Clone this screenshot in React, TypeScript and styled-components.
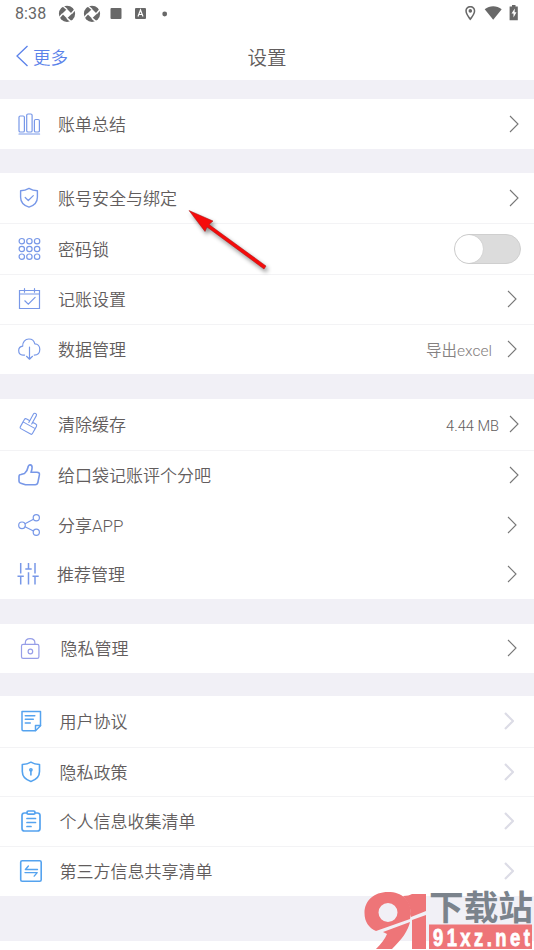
import React from "react";
import styled, { createGlobalStyle } from "styled-components";

const GlobalStyle = createGlobalStyle`
  * { box-sizing: border-box; }
  body {
    margin: 0;
    background: #f1f0f6;
    font-family: Roboto, "Noto Sans CJK SC", sans-serif;
    color: #625d5d;
  }
`;

const Screen = styled.main`
  position: relative;
  width: 534px;
  height: 950px;
  overflow: hidden;
  background: #f1f0f6;
  display: flex;
  flex-direction: column;
`;

const StatusBar = styled.div`
  height: 28px;
  flex: none;
  background: #fff;
  display: flex;
  align-items: center;
  justify-content: space-between;
  padding-left: 15px;
  color: #666;
`;

const StatusLeft = styled.div`
  display: flex;
  align-items: center;
`;

const Clock = styled.span`
  width: 41px;
  font-size: 16px;
  line-height: 28px;
  letter-spacing: 0.1px;
`;

const Header = styled.header`
  height: 52px;
  flex: none;
  background: #fff;
  display: grid;
  grid-template-columns: 1fr auto 1fr;
  align-items: center;
  padding: 7px 15px 0 15px;
`;

const BackButton = styled.button`
  display: flex;
  align-items: center;
  gap: 4px;
  padding: 0;
  border: 0;
  background: none;
  color: #5b82ea;
  font: inherit;
  font-size: 17.5px;
  font-weight: 350;
  line-height: 28px;

  svg {
    margin-top: -3px;
  }
`;

const Title = styled.h1`
  margin: 0;
  padding-top: 3px;
  font-size: 19.5px;
  font-weight: 350;
  line-height: 28px;
`;

const Card = styled.section<{ $gap: number }>`
  flex: none;
  margin-top: ${(p) => p.$gap}px;
  background: #fff;
`;

const RowBox = styled.div<{ $height: number; $divider?: boolean; $end: number }>`
  height: ${(p) => p.$height}px;
  display: flex;
  align-items: center;
  padding: 0 ${(p) => p.$end}px 0 13px;
  border-bottom: ${(p) => (p.$divider ? "1px solid #f3f3f5" : "0")};
`;

const IconSvg = styled.svg<{ $color: string }>`
  flex: none;
  width: 32px;
  height: 32px;
  margin-top: -1px;
  fill: none;
  stroke: ${(p) => p.$color};
  stroke-width: 1.2;
  stroke-linecap: round;
  stroke-linejoin: round;
`;

const Label = styled.span<{ $start: number }>`
  flex: 1;
  padding-left: ${(p) => p.$start - 45}px;
  font-size: 17px;
  font-weight: 350;
  line-height: 26px;
  padding-top: 1px;
  white-space: nowrap;
`;

const Value = styled.span<{ $size: number; $gap: number; $soft?: boolean }>`
  font-size: ${(p) => p.$size}px;
  font-weight: 350;
  line-height: 24px;
  padding-top: 2px;
  margin-right: ${(p) => p.$gap}px;
  color: ${(p) => (p.$soft ? "#858181" : "#625d5d")};
`;

const ChevronSvg = styled.svg<{ $bold?: boolean }>`
  flex: none;
  width: 10px;
  height: 18px;
  margin-top: -1px;
  fill: none;
  stroke: ${(p) => (p.$bold ? "#dcdce6" : "#777")};
  stroke-width: ${(p) => (p.$bold ? 2.2 : 1.1)};
`;

const Toggle = styled.button`
  width: 67px;
  height: 30px;
  padding: 0;
  border: 1px solid #cfcfcf;
  border-radius: 15px;
  background: #dcdcdc;
  display: flex;
`;

const Knob = styled.span`
  width: 28px;
  height: 28px;
  border-radius: 50%;
  background: #fff;
  box-shadow: 0 0 1px #aaa;
`;

const BottomBar = styled.footer`
  height: 9px;
  flex: none;
  margin-top: auto;
  background: #fff;
`;

const Pointer = styled.svg`
  position: absolute;
  left: 180px;
  top: 200px;
  filter: drop-shadow(2px 3px 2px rgba(0, 0, 0, 0.45));
`;

const Watermark = styled.div`
  position: absolute;
  left: 364px;
  top: 888px;
  width: 170px;
  height: 62px;
  display: flex;
`;

const WatermarkSvg = styled.svg`
  flex: none;
`;

const icons: Record<string, React.ReactNode> = {
  chart: (
    <>
      <rect x="6" y="8" width="5.4" height="16" rx="1.3" />
      <rect x="13.7" y="6" width="5.4" height="18" rx="1.3" />
      <rect x="21.4" y="11.5" width="5" height="12.5" rx="1.3" />
      <path d="M6 26h20.6" />
    </>
  ),
  shieldCheck: (
    <>
      <path d="M16 6.4c2.6 1.6 5.2 2.3 8.4 2.3v6.5c0 5-3.2 8.3-8.4 9.9c-5.2-1.6-8.4-4.9-8.4-9.9V8.7c3.2 0 5.8-.7 8.4-2.3Z" strokeWidth="1.4" />
      <path d="m12.2 15.5 3.1 3 5-4.9" />
    </>
  ),
  dots: (
    <>
      {[8.2, 16, 23.7].map((y) =>
        [8.8, 16.4, 24.1].map((x) => <circle key={`${x}-${y}`} cx={x} cy={y} r="2.7" />)
      )}
    </>
  ),
  calendar: (
    <path d="M6.5 7.5h20v18h-20ZM6.5 11h20M11.5 5.7v3.500M21.500 5.700v3.500M11.800 17.800l3.500 3.400 6.800-6.800" strokeLinejoin="miter" />
  ),
  cloud: (
    <path d="M11.600 22.100H10c-3 0-4.300-2-4.300-4.500 0-2.600 1.700-4.200 4-4.500-.2-4 2.300-7.100 6.200-7.100 3.300 0 5.200 1.700 5.900 4.800 2.900 0 5 2.400 5 5.400 0 3.700-2 5.900-5.600 5.900M16.500 14v12M13.500 23.300l3 2.900 3-2.900" />
  ),
  brush: (
    <g transform="translate(.7 -.5) rotate(29 16 16)" strokeWidth="1.1">
      <path d="M14.700 13.500V5.900c0-2 3.300-2 3.300 0v7.600h3.500c1.200 0 1.800.7 1.800 1.800v2.500H9.400v-2.500c0-1.100.6-1.800 1.800-1.800h3.500ZM9.400 17.800v5.700c0 .8.5 1.300 1.300 1.300h11.200c.8 0 1.400-.5 1.400-1.300v-5.700M14.700 13v2.500M18 13v2.500" />
    </g>
  ),
  thumb: (
    <path d="M11.500 14.500c2.200-2 3.200-4 3.600-6.500.4-3.200 4-2.600 4 .5 0 1.800-.5 3.200-1.100 4.700h6c1.700 0 2.700 1 2.400 2.700l-1.500 7.500c-.3 1.600-1.200 2.400-2.700 2.400H12.500l-4.700-1.500c-1.200-.3-1.800-1-1.800-2.100v-4.700c0-1.200.7-1.900 1.900-2Z" strokeWidth="1.600" />
  ),
  share: (
    <>
      <circle cx="9" cy="16.3" r="3.3" />
      <circle cx="23.3" cy="8.7" r="3.1" />
      <circle cx="23.3" cy="23.3" r="3.1" />
      <path d="m12 14.700 8.500-4.500M12 17.800l8.500 4.200" />
    </>
  ),
  sliders: (
    <path d="M7.700 5v10.500M7.700 19v7.500M4.500 18.300h6.300M15.500 5v6M15.500 14.300v12.200M12.300 11h6.400M22 5v10.500M22 19v7.500M19.500 18.300h6.200" strokeLinecap="butt" strokeWidth="1.5" />
  ),
  lock: (
    <>
      <rect x="8.5" y="12.3" width="17.4" height="14" rx="1.6" />
      <path d="M12.300 12.300v-1.400c0-2.600 2-4.300 4.800-4.300s4.800 1.700 4.800 4.300v1.400" />
      <circle cx="17.4" cy="19.500" r="2.300" />
    </>
  ),
  document: (
    <g strokeWidth="1.5">
      <path d="M9 6.500h18.500v14.200l-5 5H10.200c-.8 0-1.200-.4-1.200-1.200Z" />
      <path d="M22.500 25.500v-5h5M12.300 10.700h9.500M12.300 14.200h8M12.300 18h5" />
    </g>
  ),
  shieldKey: (
    <g strokeWidth="1.6">
      <path d="M17.900 6.200c2.600 1.700 5.300 2.300 8.600 2.300v7c0 5-3.300 8.200-8.600 9.900c-5.300-1.700-8.600-4.900-8.600-9.900v-7c3.300 0 6-.6 8.600-2.300Z" />
      <circle cx="17.900" cy="13.800" r="1.100" />
      <path d="M17.900 14.500v4.500" />
    </g>
  ),
  clipboard: (
    <g strokeWidth="1.7" transform="translate(0 .5)">
      <path d="M14 7.500h-2.500c-1.500 0-2.500 1-2.500 2.500v13c0 1.500 1 2.500 2.500 2.500h13c1.500 0 2.500-1 2.500-2.500V10c0-1.500-1-2.500-2.500-2.500H22" />
      <rect x="14" y="5.500" width="8" height="3.200" rx="1.300" />
      <path d="M14 13h8.500M14 17h8.500M14 21h4" />
    </g>
  ),
  exchange: (
    <>
      <rect x="7.700" y="5.700" width="20.500" height="20.500" rx="1.500" strokeWidth="1.600" />
      <path d="M24.500 14.500H12.400l3-3.500M12 17.600h12.200l-3 3.500" strokeWidth="1.400" />
    </>
  ),
};

function Aperture() {
  return (
    <svg width="24.5" height="20" viewBox="0 0 24.5 20">
      <circle cx="11" cy="9.8" r="8.1" fill="#686868" />
      <path d="m11 5 4.800 4.800-4.800 4.800-4.800-4.800Z" fill="#fff" />
      <path d="m11 5.500-4-3.500M15.300 9.800l3.500-4M11 14.100l4 3.500M6.700 9.800l-3.500 4" stroke="#fff" strokeWidth="1.5" />
    </svg>
  );
}

type RowProps = {
  icon: string;
  label: string;
  height: number;
  divider?: boolean;
  end?: number;
  start?: number;
  color?: string;
  bold?: boolean;
  toggle?: boolean;
  children?: React.ReactNode;
};

function Row({ icon, label, height, divider, end = 15, start = 58, color = "#7898e8", bold, toggle, children }: RowProps) {
  return (
    <RowBox $height={height} $divider={divider} $end={end}>
      <IconSvg $color={color} viewBox="0 0 32 32">{icons[icon]}</IconSvg>
      <Label $start={start}>{label}</Label>
      {children}
      {!toggle && (
        <ChevronSvg $bold={bold} viewBox="0 0 10 18">
          <path d="m1 1 8 8-8 8" />
        </ChevronSvg>
      )}
    </RowBox>
  );
}

export default function App() {
  const blue = "#55a3ef";
  return (
    <Screen>
      <GlobalStyle />
      <StatusBar>
        <StatusLeft>
          <Clock>8:38</Clock>
          <Aperture />
          <Aperture />
          <svg width="70" height="20" viewBox="105 0 70 20" fill="#686868">
            <rect x="110.5" y="4" width="11" height="11" rx="1" />
            <rect x="135" y="4" width="11" height="11" rx="1" />
            <path d="m138 12.500 2.500-6.500 2.500 6.500M138.900 10.500h3.200" fill="none" stroke="#fff" strokeWidth="1.2" />
            <circle cx="164.7" cy="10" r="2.4" />
          </svg>
        </StatusLeft>
        <svg width="74" height="20" viewBox="460 4 74 20" fill="#686868">
          <path fillRule="evenodd" d="M470.300 6c-3 0-5 2.100-5 4.900 0 3.700 5 9.400 5 9.400s5-5.700 5-9.400c0-2.800-2-4.900-5-4.900Zm0 1.400c2.100 0 3.500 1.500 3.500 3.500 0 2.300-2.300 5.300-3.500 6.900-1.200-1.600-3.500-4.600-3.500-6.900 0-2 1.400-3.500 3.500-3.500Z" />
          <circle cx="470.3" cy="10.9" r="1.8" />
          <path d="M484.700 9.200c5-4.100 12-4.100 17 0l-8.500 10.600Z" />
          <path d="M512 5h3.500v1.500h2.300v13.700h-8.200V6.500h2.400Z" />
          <path d="m514.800 8.500-3.300 5h2v4l3-5.200h-1.900Z" fill="#fff" />
        </svg>
      </StatusBar>
      <Header>
        <BackButton>
          <svg width="14" height="22" viewBox="0 0 14 22" fill="none" stroke="currentColor" strokeWidth="1.3">
            <path d="M12.500 1 2 11l10.500 10" />
          </svg>
          更多
        </BackButton>
        <Title>设置</Title>
      </Header>

      <Card $gap={19}>
        <Row icon="chart" label="账单总结" height={50} />
      </Card>

      <Card $gap={24}>
        <Row icon="shieldCheck" label="账号安全与绑定" height={51} divider />
        <Row icon="dots" label="密码锁" height={51} divider end={13} toggle>
          <Toggle role="switch" aria-checked="false" aria-label="密码锁"><Knob /></Toggle>
        </Row>
        <Row icon="calendar" label="记账设置" height={50} divider end={17} />
        <Row icon="cloud" label="数据管理" height={49} end={17}>
          <Value $size={15.5} $gap={15} $soft>导出excel</Value>
        </Row>
      </Card>

      <Card $gap={25}>
        <Row icon="brush" label="清除缓存" height={52} divider>
          <Value $size={14.6} $gap={10}>4.44 MB</Value>
        </Row>
        <Row icon="thumb" label="给口袋记账评个分吧" height={49} />
        <Row icon="share" label="分享APP" height={50} end={17} />
        <Row icon="sliders" label="推荐管理" height={49} end={17} start={57} />
      </Card>

      <Card $gap={25}>
        <Row icon="lock" label="隐私管理" height={49} end={17} start={60.5} color="#969ee8" />
      </Card>

      <Card $gap={23}>
        <Row icon="document" label="用户协议" height={52} divider end={20} start={59.5} color={blue} bold />
        <Row icon="shieldKey" label="隐私政策" height={49} divider end={20} start={59.5} color={blue} bold />
        <Row icon="clipboard" label="个人信息收集清单" height={50} divider end={20} start={59.5} color={blue} bold />
        <Row icon="exchange" label="第三方信息共享清单" height={49} end={20} start={59.5} color={blue} bold />
      </Card>
      <BottomBar />

      <Pointer width="100" height="80" viewBox="180 200 100 80">
        <path d="m189 210.500 24 10.500-4 3.500 57 41.500-2 3-57-42-2 4.500Z" fill="#f50b0b" stroke="#a31212" strokeWidth=".5" />
      </Pointer>

      <Watermark>
        <WatermarkSvg width="170" height="62" viewBox="364 888 170 62">
          <g fill="#ee7578">
            <path fillRule="evenodd" d="M388 892c14 0 23 8 23 22l-1 5-34 12c-7-3-11.500-9-11.500-18 0-12 9-21 23.500-21Zm0 11a9.500 9.500 0 1 0 0 19 9.500 9.500 0 0 0 0-19Z" />
            <path d="m383 932 27-10c-2 9-8 17-18 27h-16c5-5 9-10 11-15Z" />
            <path d="M403 896c4 0 7-1 9-2h14v17l-15 6c0-8-2-14-8-21ZM412 920l14-5v34h-14Z" />
            <rect x="429" y="924.5" width="103" height="24.5" />
          </g>
          <text x="429" y="919.5" textLength="104" lengthAdjust="spacingAndGlyphs" fontFamily="Noto Sans CJK SC, sans-serif" fontSize="34" fontWeight="700" fill="#7b838c">下载站</text>
          <text transform="translate(433 945.5) scale(.8 1)" textLength="121" lengthAdjust="spacing" fontFamily="Liberation Sans, sans-serif" fontSize="23" fontWeight="700" fill="#fff" stroke="#fff" strokeWidth=".8">91xz.net</text>
        </WatermarkSvg>
      </Watermark>
    </Screen>
  );
}
